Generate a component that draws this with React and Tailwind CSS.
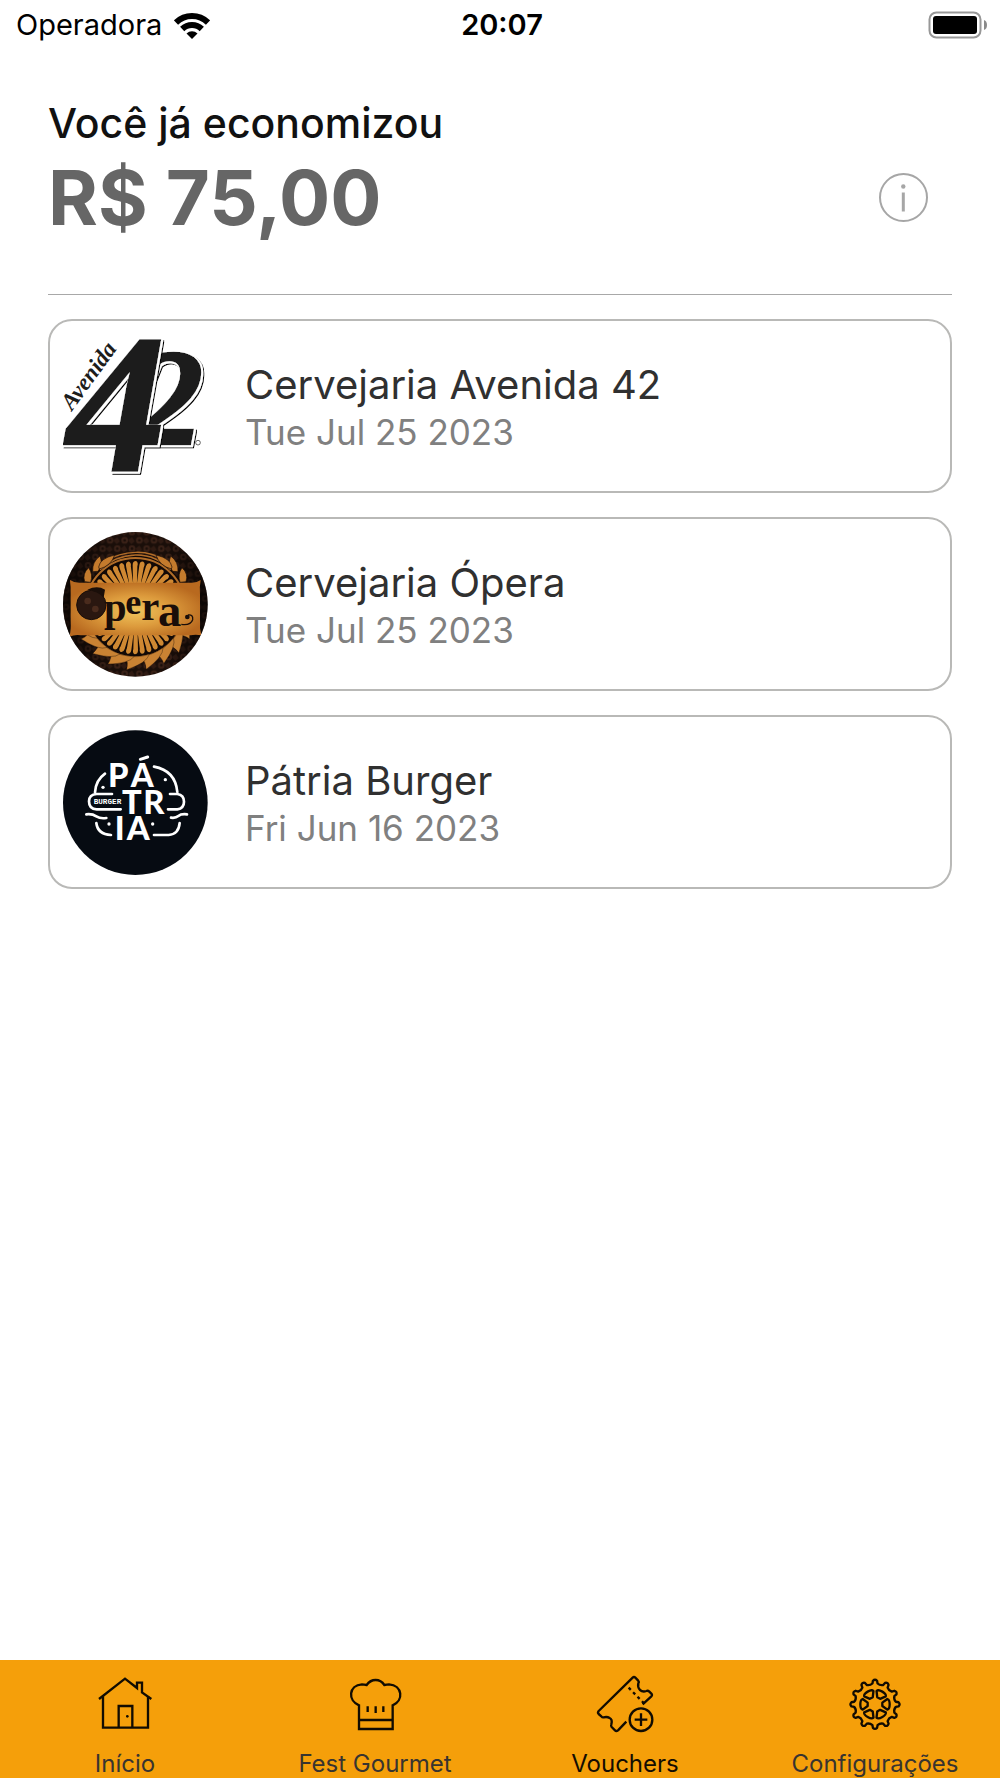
import React from 'react';

const BROWN = '#1a0e09';

function WifiIcon() {
  return (
    <svg viewBox="0 0 36 27" className="h-[27px] w-9" aria-hidden="true">
      <g fill="none" stroke="#000" strokeWidth="6">
        <path d="M2 10.500a23 23 0 0 1 32 0" />
        <path d="M8.200 17a14 14 0 0 1 19.600 0" />
      </g>
      <path d="M12.500 21.500a8 8 0 0 1 11 0L18 27z" />
    </svg>
  );
}

function BatteryIcon() {
  return (
    <svg viewBox="0 0 60 28" className="h-7 w-[60px]" aria-hidden="true">
      <rect x="1.500" y="1.500" width="51" height="25" rx="7" fill="#fff" stroke="#979797" strokeWidth="2" />
      <rect x="5" y="5" width="44" height="18" rx="3" />
      <path d="M56 9q3 1 3 5t-3 5z" fill="#8a8a8a" />
    </svg>
  );
}

function InfoIcon() {
  return (
    <svg viewBox="0 0 49 49" className="size-[49px]" aria-hidden="true">
      <circle cx="24.500" cy="24.500" r="23.500" fill="none" stroke="#a6a6a6" strokeWidth="2" />
      <circle cx="24.300" cy="13.500" r="2.200" fill="#a6a6a6" />
      <path d="M24.300 19.500v19" stroke="#a6a6a6" strokeWidth="3" />
    </svg>
  );
}

function AvenidaLogo() {
  return (
    <svg viewBox="69 68 435 435" className="size-[145px] shrink-0" role="img" aria-label="Avenida 42">
      <defs>
        {/* white rim with a thin dark line at the lower right */}
        <filter id="avenida-rim" x="-10%" y="-10%" width="120%" height="120%">
          <feMorphology in="SourceAlpha" operator="dilate" radius="3" result="fat" />
          <feOffset in="fat" dx="6" dy="6" result="line" />
          <feFlood floodColor="#fff" />
          <feComposite in2="fat" operator="in" result="rim" />
          <feOffset in="rim" dx="2" dy="2" result="rim" />
          <feMerge>
            <feMergeNode in="line" />
            <feMergeNode in="rim" />
            <feMergeNode in="SourceGraphic" />
          </feMerge>
        </filter>
      </defs>
      <g
        fontFamily="Liberation Serif"
        fontWeight="700"
        fontStyle="italic"
        fill="#1d1d1b"
        stroke="#1d1d1b"
        strokeWidth="8"
      >
        <text x="284" y="398" fontSize="410" filter="url(#avenida-rim)">2</text>
        <text x="82" y="478" fontSize="590" filter="url(#avenida-rim)">4</text>
      </g>
      <text
        transform="translate(96 300) rotate(-54)"
        fontFamily="Liberation Serif"
        fontWeight="700"
        fontStyle="italic"
        fontSize="70"
        fill="#1d1d1b"
      >
        Avenida
      </text>
      <circle cx="474" cy="394" r="7" fill="none" stroke="#1d1d1b" strokeWidth="2" />
    </svg>
  );
}

const rays = Array.from({ length: 40 }, (_, i) => i * 9);
const leaves = [-68, -52, -35, -18, 0, 18, 35, 52, 68];

function OperaLogo() {
  return (
    <svg viewBox="69 63 435 435" className="size-[145px] shrink-0" role="img" aria-label="Opera">
      <defs>
        <clipPath id="opera-clip">
          <circle cx="286" cy="280" r="217" />
        </clipPath>
        <pattern id="opera-damask" width="44" height="50" patternUnits="userSpaceOnUse">
          <rect width="44" height="50" fill={BROWN} />
          <circle cx="12" cy="13" r="10" fill="#3a2117" />
          <circle cx="34" cy="38" r="10" fill="#3a2117" />
          <circle cx="12" cy="13" r="4" fill={BROWN} />
          <circle cx="34" cy="38" r="4" fill={BROWN} />
          <path d="M22 13l12-9 8 12-10 8zM0 38l12-9 8 12-10 8z" fill="#2f1a12" />
        </pattern>
        <radialGradient id="opera-gold" cx="50%" cy="55%" r="55%">
          <stop offset="0" stopColor="#f0c55c" />
          <stop offset="0.500" stopColor="#dc9a3c" />
          <stop offset="1" stopColor="#b8691f" />
        </radialGradient>
        <linearGradient id="opera-shade" x1="0" x2="1">
          <stop offset="0" stopColor="#000" stopOpacity="0.600" />
          <stop offset="0.350" stopColor="#000" stopOpacity="0" />
          <stop offset="0.700" stopColor="#000" stopOpacity="0" />
          <stop offset="1" stopColor="#000" stopOpacity="0.600" />
        </linearGradient>
      </defs>
      <g clipPath="url(#opera-clip)">
        <rect x="69" y="63" width="435" height="435" fill="url(#opera-damask)" />
        <rect x="69" y="63" width="435" height="435" fill="url(#opera-shade)" />
        <circle cx="286" cy="290" r="156" fill="#120906" />
        <g fill="none" stroke="#b06c28">
          <circle cx="286" cy="290" r="149" strokeWidth="6" />
          <path d="M180 176q46-42 106-44t106 44" strokeWidth="4" />
          <path d="M196 150q40-24 90-26t90 26" strokeWidth="4" />
        </g>
        <g fill="#cf8832">
          {rays.map((a) => (
            <path key={a} d="M281 290l-3-128q0-12 10-12 8 4 4 16l-3 124z" transform={`rotate(${a} 286 290)`} />
          ))}
        </g>
        {/* wheat ears on both shoulders */}
        <g fill="#c47b2d" stroke={BROWN} strokeWidth="2">
          <path d="M158 182q-2-30 22-47 10 24-6 46z" />
          <path d="M176 168q4-26 48-36-10 32-46 42z" />
          <path d="M134 212q-8-24 12-42 14 20 6 44z" />
          <path d="M414 182q2-30-22-47-10 24 6 46z" />
          <path d="M396 168q-4-26-48-36 10 32 46 42z" />
          <path d="M438 212q8-24-12-42-14 20-6 44z" />
        </g>
        {/* feathered wreath under the banner */}
        <g fill="#c98233" stroke={BROWN} strokeWidth="1">
          {leaves.map((a) => (
            <path key={a} d="M256 434q34 8 72-4-8 26-68 46 6-20-4-42z" transform={`rotate(${a} 286 290)`} />
          ))}
        </g>
        <path
          d="M90 207q15 10 34 8h326q18 2 32-8-4 20-2 44v76q-2 26 4 46-16-4-34 0H124q-18-4-36 4 6-20 4-48v-76q1-26-2-44z"
          fill="url(#opera-gold)"
        />
        <circle cx="154" cy="282" r="44" fill="#2a1710" stroke={BROWN} strokeWidth="3" />
        <path d="M142 236q30-14 53 0l-4 24q-14-18-49-24z" fill={BROWN} />
        <circle cx="143" cy="270" r="10" fill="#4a2b1d" />
        <circle cx="166" cy="294" r="10" fill="#4a2b1d" />
        <g fontFamily="Liberation Serif" fontWeight="700" fill={BROWN}>
          <text x="192" y="330" fontSize="122">p</text>
          <text x="256" y="310" fontSize="108">e</text>
          <text x="304" y="326" fontSize="122">r</text>
          <text x="354" y="346" fontSize="140">a</text>
        </g>
        <path d="M424 340q28 4 34-14 2-16-14-14" fill="none" stroke={BROWN} strokeWidth="4" />
        <circle cx="442" cy="318" r="7" fill={BROWN} />
      </g>
    </svg>
  );
}

function PatriaLogo() {
  return (
    <svg viewBox="69 57 435 435" className="size-[145px] shrink-0" role="img" aria-label="Pátria Burger">
      <circle cx="286" cy="275" r="217" fill="#060b12" />
      <g fill="none" stroke="#fff" strokeWidth="8" strokeLinecap="round">
        <path d="M195 188q-28 20-30 56" />
        <path d="M342 167q64 12 70 76" />
        <path d="M216 249h-46q-23 2-23 22 0 24 23 24h72" />
        <path d="M390 249h22q20 3 20 23t-20 23h-28" />
        <path d="M139 310q18-2 30 6t30 5" />
        <path d="M441 310q-18-2-26 5t-22 5" />
        <path d="M169 336q4 34 44 36" />
        <path d="M342 372h44q30-2 33-36" />
        <path d="M301 145l22-7" strokeWidth="9" />
      </g>
      <g fill="#fff">
        <circle cx="189" cy="229" r="5" />
        <circle cx="376" cy="206" r="5" />
        <circle cx="207" cy="339" r="5" />
        <circle cx="338" cy="339" r="5" />
      </g>
      <g fontFamily="Lato" fontWeight="900" fill="#fff" fontSize="98">
        <text x="204" y="229">P</text>
        <text x="272" y="229">A</text>
        <text x="246" y="309">T</text>
        <text x="310" y="309">R</text>
        <text x="224" y="387">I</text>
        <text x="260" y="387">A</text>
      </g>
      <text x="161" y="280" fontFamily="Liberation Mono" fontWeight="700" fontSize="23" fill="#fff">
        BURGER
      </text>
    </svg>
  );
}

function HomeIcon() {
  return (
    <svg viewBox="105 72 180 180" className="size-[60px]" aria-hidden="true">
      <g fill="none" stroke="#120c02" strokeWidth="7">
        <path d="M117 147l78-61 36 28V98h15v29l28 20" />
        <path d="M129 139v94h135v-94" />
        <path d="M176 232v-64h41v64" />
      </g>
      <circle cx="202" cy="199" r="4" fill="#120c02" />
    </svg>
  );
}

function ChefIcon() {
  return (
    <svg viewBox="855 72 180 180" className="size-[60px]" aria-hidden="true">
      <g fill="none" stroke="#120c02" strokeWidth="7">
        <path d="M897 237v-71c-34-14-32-60 9-63 6 0 10 1 14 2 14-20 40-20 53 0 4-1 8-2 14-2 41 3 45 49 11 63v71z" />
        <path d="M897 210h101M923 169v17M947 169v20M970 169v17" />
      </g>
    </svg>
  );
}

function VoucherIcon() {
  return (
    <svg viewBox="165 72 180 180" className="size-[60px]" aria-hidden="true">
      <g fill="none" stroke="#120c02" strokeWidth="7" strokeLinejoin="round">
        <path d="M259 215l-25 26q-5 4-9 0l-10-10q-3-4-1-8 4-15-5-19-8-5-18-2-4 1-7-3l-8-7q-4-4 0-9l102-100q4-4 8 0l8 8q4 4 1 9-3 11 5 20 8 7 19 3 5-2 9 2l6 6q4 4 0 8l-26 24" />
        <path d="M266 113l46 47" strokeDasharray="9 10" />
        <circle cx="303" cy="209" r="34" />
        <path d="M303 190v38M284 209h38" />
      </g>
    </svg>
  );
}

const teeth = Array.from({ length: 12 }, (_, i) => i * 30);
const spokes = [0, 60, 120, 180, 240, 300];

function polar(r, deg) {
  const a = (deg * Math.PI) / 180;
  return `${(r * Math.cos(a)).toFixed(1)} ${(r * Math.sin(a)).toFixed(1)}`;
}

function GearIcon() {
  const outline = teeth
    .map((a, i) => `${i ? 'L' : 'M'}${polar(63, a - 7)}L${polar(71, a - 5)}Q${polar(77, a)} ${polar(71, a + 5)}L${polar(63, a + 7)}Q${polar(58, a + 15)} ${polar(63, a + 23)}`)
    .join('');
  return (
    <svg viewBox="-90 -91 180 180" className="size-[60px]" aria-hidden="true">
      <g fill="none" stroke="#120c02" strokeWidth="7" strokeLinejoin="round">
        <path d={`${outline}Z`} />
        {spokes.map((a) => (
          <path key={a} d="M22-5L37-16Q44-14 44 0T37 16L22 5Z" transform={`rotate(${a})`} />
        ))}
      </g>
    </svg>
  );
}

const vouchers = [
  { name: 'Cervejaria Avenida 42', date: 'Tue Jul 25 2023', Logo: AvenidaLogo },
  { name: 'Cervejaria Ópera', date: 'Tue Jul 25 2023', Logo: OperaLogo },
  { name: 'Pátria Burger', date: 'Fri Jun 16 2023', Logo: PatriaLogo },
];

const tabs = [
  { label: 'Início', Icon: HomeIcon },
  { label: 'Fest Gourmet', Icon: ChefIcon },
  { label: 'Vouchers', Icon: VoucherIcon, active: true },
  { label: 'Configurações', Icon: GearIcon },
];

function StatusBar() {
  return (
    <div className="grid h-[50px] grid-cols-3 items-center pr-3 pl-4 text-[29px] leading-[30px] text-black">
      <div className="flex items-center gap-3">
        <span>Operadora</span>
        <WifiIcon />
      </div>
      <span className="text-center font-semibold">20:07</span>
      <div className="flex justify-end">
        <BatteryIcon />
      </div>
    </div>
  );
}

function VoucherCard({ name, date, Logo }) {
  return (
    <li className="flex items-center gap-[37px] rounded-3xl border-2 border-[#b9b9b7] px-[13px] pt-[13px] pb-3">
      <Logo />
      <div className="pt-0.5">
        <h2 className="text-[40px] leading-[48px] text-[#303030]">{name}</h2>
        <p className="text-[35px] leading-[46px] text-[#808080]">{date}</p>
      </div>
    </li>
  );
}

export default function App() {
  return (
    <div className="flex min-h-screen flex-col bg-white font-['Inter',sans-serif]">
      <StatusBar />
      <main className="flex-1 px-12 pt-12">
        <header className="border-b border-[#a8a8a8] pb-[52px]">
          <h1 className="text-[41px] leading-[50px] font-medium text-[#111]">Você já economizou</h1>
          <div className="mt-1 flex items-center justify-between pr-6">
            <p className="text-[76px] leading-[90px] font-bold text-[#666]">R$ 75,00</p>
            <button type="button" aria-label="Informações">
              <InfoIcon />
            </button>
          </div>
        </header>
        <ul className="mt-6 flex flex-col gap-6">
          {vouchers.map((v) => (
            <VoucherCard key={v.name} {...v} />
          ))}
        </ul>
      </main>
      <nav className="grid grid-cols-4 bg-[#f59f0a] pt-3.5">
        {tabs.map(({ label, Icon, active }) => (
          <a
            key={label}
            href="#"
            aria-current={active ? 'page' : undefined}
            className={`flex flex-col items-center gap-4 text-2xl leading-7 ${active ? 'text-[#140d02]' : 'text-[#383430]'}`}
          >
            <Icon />
            {label}
          </a>
        ))}
      </nav>
    </div>
  );
}
